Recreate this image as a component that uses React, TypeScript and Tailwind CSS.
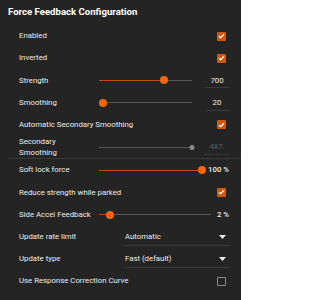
import React from 'react';

const font = { fontFamily: 'Roboto, "Noto Sans", sans-serif' };

function Check({ on }: { on: boolean }) {
  return on ? (
    <span className="flex h-[9px] w-[9px] items-center justify-center rounded-[1px] bg-[#d3560f]">
      <svg width="7" height="6" viewBox="0 0 7 6">
        <path d="M1 3.2 L2.7 4.7 L6 1.2" stroke="#fff" strokeWidth="1.3" fill="none" />
      </svg>
    </span>
  ) : (
    <span className="h-[9px] w-[9px] rounded-[1px] border border-[#8a8a8a]" />
  );
}

function CheckRow({ label, on }: { label: string; on: boolean }) {
  return (
    <div className="flex h-[22.2px] items-center justify-between pr-[3px]">
      <span>{label}</span>
      <Check on={on} />
    </div>
  );
}

function Track({ pct, disabled }: { pct: number; disabled?: boolean }) {
  return (
    <div className="relative h-[7px] flex-1">
      <div className="absolute left-0 right-0 top-[3px] h-px bg-[#555]" />
      {!disabled && (
        <div className="absolute left-0 top-[3px] h-px bg-[#c04d0e]" style={{ width: `${pct}%` }} />
      )}
      {disabled ? (
        <div
          className="absolute top-[1px] h-[5px] w-[5px] -translate-x-1/2 rounded-full bg-[#8a8a8a]"
          style={{ left: `${pct}%` }}
        />
      ) : (
        <div
          className="absolute top-[-0.5px] h-[8px] w-[8px] -translate-x-1/2 rounded-full bg-[#f2660c]"
          style={{ left: `${pct}%` }}
        />
      )}
    </div>
  );
}

function SliderRow({ label, pct, value, disabled }: { label: React.ReactNode; pct: number; value: string; disabled?: boolean }) {
  return (
    <div className="flex h-[22.2px] items-center">
      <span className="w-[79px] shrink-0 leading-[11px]">{label}</span>
      <div className="flex flex-1 items-center pl-[1px]">
        <Track pct={pct} disabled={disabled} />
        <span
          className={`ml-[13px] w-[24px] shrink-0 pb-[1px] pt-[2px] text-center ${
            disabled ? 'border-b border-dotted border-[#444] text-[#5c5c5c]' : 'border-b border-[#3a3a3a]'
          }`}
        >
          {value}
        </span>
      </div>
    </div>
  );
}

function PctRow({ label, pct, value }: { label: string; pct: number; value: string }) {
  return (
    <div className="flex h-[22.2px] items-center">
      <span className="w-[79px] shrink-0 whitespace-nowrap">{label}</span>
      <div className="flex flex-1 items-center pl-[1px]">
        <Track pct={pct} />
        <span className="ml-[6px] shrink-0 font-medium">{value}</span>
      </div>
    </div>
  );
}

function SelectRow({ label, value }: { label: string; value: string }) {
  return (
    <div className="flex h-[22.2px] items-center">
      <span className="w-[105px] shrink-0">{label}</span>
      <div className="flex flex-1 items-center justify-between border-b border-[#3a3a3a] pb-[2px] pl-[1px] pr-[3px] pt-[3px]">
        <span>{value}</span>
        <svg width="7" height="4" viewBox="0 0 7 4">
          <path d="M0 0 H7 L3.5 4 Z" fill="#eee" />
        </svg>
      </div>
    </div>
  );
}

export default function App() {
  return (
    <div className="h-[300px] w-[241px] overflow-hidden bg-[#242424] text-[#ececec]" style={font}>
      <div className="flex h-[25px] items-center px-[8px] text-[9.6px] font-bold text-white">
        Force Feedback Configuration
      </div>
      <div className="pl-[19px] pr-[12px] text-[7.8px]">
        <CheckRow label="Enabled" on />
        <CheckRow label="Inverted" on />
        <SliderRow label="Strength" pct={70} value="700" />
        <SliderRow label="Smoothing" pct={4} value="20" />
        <CheckRow label="Automatic Secondary Smoothing" on />
        <SliderRow
          label={
            <>
              Secondary
              <br />
              Smoothing
            </>
          }
          pct={100}
          value="487."
          disabled
        />
      </div>
      <div className="ml-[8px] h-px bg-[#3a3a3a]" />
      <div className="pl-[19px] pr-[12px] text-[7.8px]">
        <PctRow label="Soft lock force" pct={100} value="100 %" />
        <CheckRow label="Reduce strength while parked" on />
        <PctRow label="Side Accel Feedback" pct={10} value="2 %" />
        <SelectRow label="Update rate limit" value="Automatic" />
        <SelectRow label="Update type" value="Fast (default)" />
        <CheckRow label="Use Response Correction Curve" on={false} />
      </div>
    </div>
  );
}
